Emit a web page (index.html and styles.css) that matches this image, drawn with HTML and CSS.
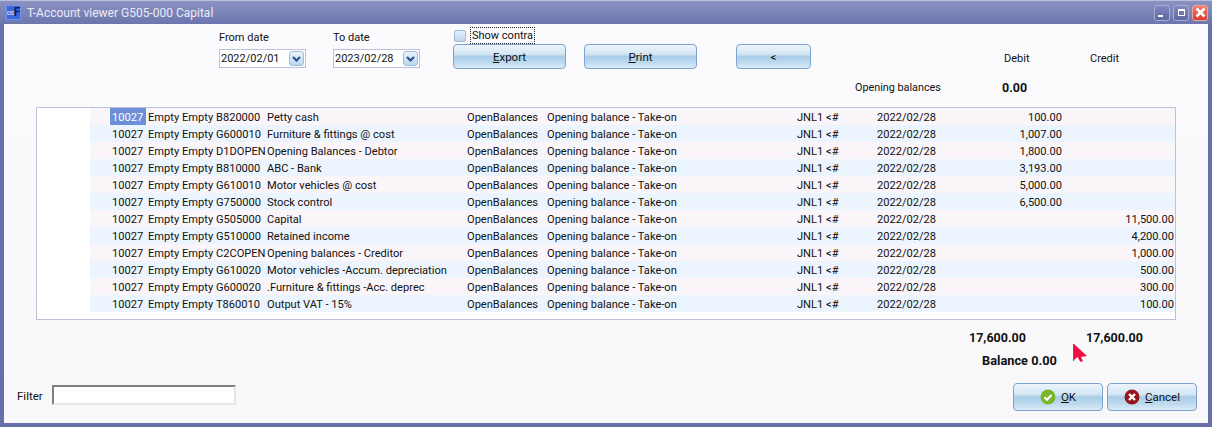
FILE: index.html
```html
<!DOCTYPE html>
<html lang="en">
<head>
  <meta charset="UTF-8">
  <title>T-Account viewer G505-000 Capital</title>
  <link rel="stylesheet" href="styles.css">
</head>
<body>
  <div class="window">
    <div class="titlebar">
      <div class="app-icon"><span class="icon-os">OS</span><span class="icon-f">F</span></div>
      <div class="title">T-Account viewer G505-000 Capital</div>
      <div class="win-btn"><span class="min-glyph"></span></div>
      <div class="win-btn"><span class="max-glyph"></span></div>
      <div class="win-btn close">
        <svg width="13" height="13" viewBox="0 0 13 13"><path d="M2.500 2.500l8 8M10.500 2.500l-8 8" stroke="#fff" stroke-width="2.600"/></svg>
      </div>
    </div>
    <div class="content">
      <div class="toolbar">
        <div class="date-group">
          <label>From date</label>
          <div class="date-input"><span>2022/02/01</span><span class="drop"><svg width="9" height="6" viewBox="0 0 9 6"><path d="M1 1l3.500 3.500L8 1" fill="none" stroke="#1f4f96" stroke-width="2"/></svg></span></div>
        </div>
        <div class="date-group to-date">
          <label>To date</label>
          <div class="date-input"><span>2023/02/28</span><span class="drop"><svg width="9" height="6" viewBox="0 0 9 6"><path d="M1 1l3.500 3.500L8 1" fill="none" stroke="#1f4f96" stroke-width="2"/></svg></span></div>
        </div>
        <div class="actions">
          <div class="check-row"><span class="checkbox"></span><span class="check-label">Show contra</span></div>
          <button class="btn btn-export"><u>E</u>xport</button>
        </div>
        <button class="btn btn-print"><u>P</u>rint</button>
        <button class="btn btn-back">&lt;</button>
        <div class="balances">
          <div class="heads"><span class="head-debit">Debit</span><span class="head-credit">Credit</span></div>
          <div class="opening"><span>Opening balances</span><b>0.00</b></div>
        </div>
      </div>

      <div class="grid">
        <div class="row"><span class="cur">10027</span><span>Empty</span><span>Empty</span><span>B820000</span><span>Petty cash</span><span>OpenBalances</span><span>Opening balance - Take-on</span><span>JNL1 &lt;#</span><span>2022/02/28</span><span class="num">100.00</span><span class="num"></span></div>
        <div class="row"><span>10027</span><span>Empty</span><span>Empty</span><span>G600010</span><span>Furniture &amp; fittings @ cost</span><span>OpenBalances</span><span>Opening balance - Take-on</span><span>JNL1 &lt;#</span><span>2022/02/28</span><span class="num">1,007.00</span><span class="num"></span></div>
        <div class="row"><span>10027</span><span>Empty</span><span>Empty</span><span>D1DOPEN</span><span>Opening Balances - Debtor</span><span>OpenBalances</span><span>Opening balance - Take-on</span><span>JNL1 &lt;#</span><span>2022/02/28</span><span class="num">1,800.00</span><span class="num"></span></div>
        <div class="row"><span>10027</span><span>Empty</span><span>Empty</span><span>B810000</span><span>ABC - Bank</span><span>OpenBalances</span><span>Opening balance - Take-on</span><span>JNL1 &lt;#</span><span>2022/02/28</span><span class="num">3,193.00</span><span class="num"></span></div>
        <div class="row"><span>10027</span><span>Empty</span><span>Empty</span><span>G610010</span><span>Motor vehicles @ cost</span><span>OpenBalances</span><span>Opening balance - Take-on</span><span>JNL1 &lt;#</span><span>2022/02/28</span><span class="num">5,000.00</span><span class="num"></span></div>
        <div class="row"><span>10027</span><span>Empty</span><span>Empty</span><span>G750000</span><span>Stock control</span><span>OpenBalances</span><span>Opening balance - Take-on</span><span>JNL1 &lt;#</span><span>2022/02/28</span><span class="num">6,500.00</span><span class="num"></span></div>
        <div class="row"><span>10027</span><span>Empty</span><span>Empty</span><span>G505000</span><span>Capital</span><span>OpenBalances</span><span>Opening balance - Take-on</span><span>JNL1 &lt;#</span><span>2022/02/28</span><span class="num"></span><span class="num">11,500.00</span></div>
        <div class="row"><span>10027</span><span>Empty</span><span>Empty</span><span>G510000</span><span>Retained income</span><span>OpenBalances</span><span>Opening balance - Take-on</span><span>JNL1 &lt;#</span><span>2022/02/28</span><span class="num"></span><span class="num">4,200.00</span></div>
        <div class="row"><span>10027</span><span>Empty</span><span>Empty</span><span>C2COPEN</span><span>Opening balances - Creditor</span><span>OpenBalances</span><span>Opening balance - Take-on</span><span>JNL1 &lt;#</span><span>2022/02/28</span><span class="num"></span><span class="num">1,000.00</span></div>
        <div class="row"><span>10027</span><span>Empty</span><span>Empty</span><span>G610020</span><span>Motor vehicles -Accum. depreciation</span><span>OpenBalances</span><span>Opening balance - Take-on</span><span>JNL1 &lt;#</span><span>2022/02/28</span><span class="num"></span><span class="num">500.00</span></div>
        <div class="row"><span>10027</span><span>Empty</span><span>Empty</span><span>G600020</span><span>.Furniture &amp; fittings -Acc. deprec</span><span>OpenBalances</span><span>Opening balance - Take-on</span><span>JNL1 &lt;#</span><span>2022/02/28</span><span class="num"></span><span class="num">300.00</span></div>
        <div class="row"><span>10027</span><span>Empty</span><span>Empty</span><span>T860010</span><span>Output VAT - 15%</span><span>OpenBalances</span><span>Opening balance - Take-on</span><span>JNL1 &lt;#</span><span>2022/02/28</span><span class="num"></span><span class="num">100.00</span></div>
      </div>

      <div class="totals"><b>17,600.00</b><b>17,600.00</b></div>
      <div class="balance"><b>Balance 0.00</b></div>

      <div class="footer">
        <label class="filter-label">Filter</label>
        <div class="filter-input"></div>
        <button class="btn btn-ok">
          <svg width="16" height="16" viewBox="0 0 16 16"><circle cx="8" cy="8" r="7.500" fill="#7ab62c"/><path d="M4.500 8.200l2.500 2.500 4.500-4.700" fill="none" stroke="#fff" stroke-width="2.200"/></svg>
          <span><u>O</u>K</span>
        </button>
        <button class="btn btn-cancel">
          <svg width="16" height="16" viewBox="0 0 16 16"><circle cx="8" cy="8" r="7.500" fill="#96151c"/><path d="M5 5l6 6M11 5l-6 6" stroke="#fff" stroke-width="2.400"/></svg>
          <span><u>C</u>ancel</span>
        </button>
      </div>
    </div>

    <svg class="cursor" width="15" height="20" viewBox="0 0 15 20"><path d="M1 1V17L4.500 14 7.500 19 10 18 8 14 14 13Z" fill="#ee1144"/><path d="M.5 1V18" stroke="#666" stroke-width="1"/></svg>
  </div>
</body>
</html>
```

FILE: styles.css
```css
html, body { margin: 0; padding: 0; }
body { width: 1212px; height: 427px; overflow: hidden; font-family: Roboto, "Liberation Sans", Arial, sans-serif; font-size: 11.5px; color: #111; }
.window { position: relative; width: 1212px; height: 427px; box-sizing: border-box; background: #6770a9; padding: 0 4px 4px; border-top: 1px solid #b9bfdc; display: flex; flex-direction: column; }

.titlebar { height: 23px; flex: none; display: flex; align-items: center; margin: 0 -4px; padding: 0 4px 0 6px; background: linear-gradient(#8b92c2, #6c75ad); }
.app-icon { width: 15px; height: 15px; box-sizing: border-box; border: 1px solid #6f94e8; background: #3a68dc; display: flex; align-items: center; justify-content: center; font-weight: bold; line-height: 13px; overflow: hidden; }
.icon-os { font-size: 6px; color: #c9d5f6; letter-spacing: -.5px; }
.icon-f { font-size: 12px; color: #0f1f5c; }
.title { flex: 1; margin-left: 6px; color: #e9ebf6; font-size: 12px; }
.win-btn { width: 16px; height: 16px; box-sizing: border-box; margin-left: 3px; border: 1px solid #a8aed3; border-radius: 3px; background: linear-gradient(#8289bd, #5f68a5); display: flex; align-items: center; justify-content: center; }
.win-btn.close { background: linear-gradient(#f57f6e, #d93a2e); border-color: #e9a9a0; }
.min-glyph { width: 5px; height: 2px; background: #fff; margin: 7px 3px 0 0; }
.max-glyph { width: 5px; height: 4px; border: 1px solid #fff; border-top-width: 2px; }

.content { flex: 1; background: linear-gradient(#fbfbfe, #f8f8fa); display: flex; flex-direction: column; }

.toolbar { height: 83px; flex: none; display: flex; align-items: flex-start; padding-left: 215px; }
.toolbar > * { flex: none; }
.date-group { width: 114px; padding-top: 7px; }
.date-group label { display: block; height: 18px; line-height: 14px; font-size: 11px; }
.date-input { width: 87px; height: 19px; box-sizing: border-box; border: 1px solid #bcc2dd; background: #fff; display: flex; align-items: center; justify-content: space-between; padding: 0 1px 0 1px; font-size: 11px; }
.drop { width: 15px; height: 15px; box-sizing: border-box; border: 1px solid #9dbbdc; border-radius: 3px; background: linear-gradient(#eaf3fb, #bcd7ec); display: flex; align-items: center; justify-content: center; }
.to-date { width: 120px; }

.actions { width: 131px; padding-top: 3px; }
.check-row { height: 17px; display: flex; align-items: center; }
.checkbox { width: 10px; height: 10px; border: 1px solid #9dbbdc; border-radius: 2px; background: linear-gradient(#e6f0f9, #bed8ed); margin-left: 1px; }
.check-label { margin-left: 5px; padding: 0 1px; outline: 1px dotted #222; line-height: 15px; font-size: 11px; }

.btn { box-sizing: border-box; border: 1px solid #7ba3cf; border-radius: 4px; background: linear-gradient(#eef5fb 0, #d3e5f3 40%, #a9cde8 50%, #bcd9ee 75%, #dbebf7 100%); font-family: inherit; font-size: 11.5px; color: #111; padding: 0; }
.btn-export, .btn-print { width: 113px; height: 25px; }
.btn-export { display: block; }
.btn-print { margin: 20px 39px 0 0; }
.btn-back { width: 75px; height: 25px; margin-top: 20px; }

.balances { position: relative; width: 340px; margin-left: 44px; }
.heads { height: 28px; padding: 28px 0 0 149px; display: flex; line-height: 14px; font-size: 11px; }
.head-debit { width: 86px; }
.opening { position: absolute; top: 57px; left: 0; display: flex; line-height: 14px; }
.opening span { width: 147px; font-size: 10.8px; }
.opening b { font-size: 12.5px; }

.grid { margin-left: 32px; width: 1140px; height: 213px; flex: none; box-sizing: border-box; border: 1px solid #bcc2dd; background: #fff; padding-left: 53px; }
.row { height: 17px; display: grid; grid-template-columns: 36px 34px 34px 51px 200px 80px 250px 80px 90px 99px 112px; grid-template-rows: 17px; padding-left: 20px; line-height: 19px; font-size: 11.1px; }
.row:nth-child(odd) { background: #faf5f9; }
.row:nth-child(even) { background: #ecf5fd; }
.row span { padding: 0 2px; overflow: hidden; white-space: nowrap; }
.row .cur { background: #6d8fd8; color: #fff; }
.row .num { text-align: right; }

.totals { margin-top: 11px; height: 14px; padding-left: 965px; display: flex; line-height: 14px; font-size: 12.5px; }
.totals b { width: 117px; }
.balance { margin-top: 9px; height: 14px; padding-left: 978px; line-height: 14px; font-size: 12.8px; }

.footer { margin-top: 15px; display: flex; align-items: flex-start; height: 28px; padding-left: 13px; }
.filter-label { width: 35px; margin-top: 6px; line-height: 14px; }
.filter-input { width: 184px; height: 20px; margin-top: 2px; box-sizing: border-box; border: 2px solid; border-color: #808080 #e6e6e6 #e6e6e6 #808080; background: #fff; }
.btn-ok, .btn-cancel { width: 90px; height: 28px; display: flex; align-items: center; justify-content: center; gap: 5px; }
.btn-ok { margin-left: auto; }
.btn-cancel { margin: 0 11px 0 4px; }

.cursor { position: absolute; left: 1073px; top: 342px; }
```
